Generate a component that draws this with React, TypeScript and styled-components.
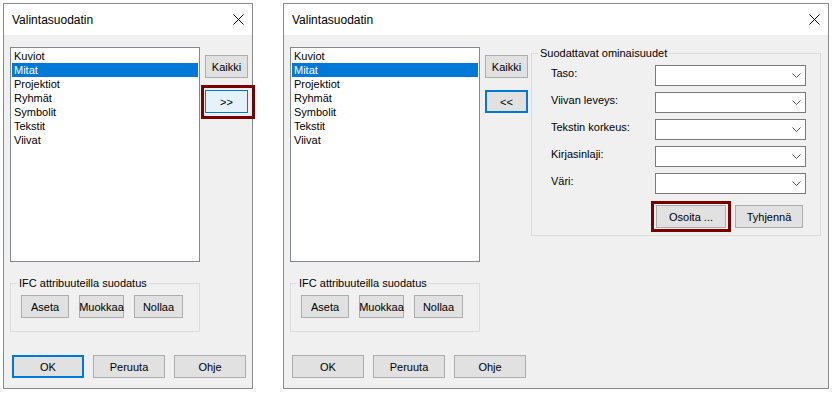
import React from "react";
import styled, { createGlobalStyle, css } from "styled-components";

const GlobalStyle = createGlobalStyle`
  html, body { margin: 0; padding: 0; background: #ffffff; }
  body {
    font-family: "Liberation Sans", Arial, sans-serif;
    font-size: 11px;
    color: #000000;
  }
  * { box-sizing: border-box; }
`;

const Page = styled.div`
  display: flex;
  align-items: flex-start;
  gap: 30px;
  padding: 3px 0 0 3px;
  width: 836px;
  height: 395px;
`;

const Dialog = styled.div<{ $w: number }>`
  width: ${(p) => p.$w}px;
  height: 386px;
  border: 1px solid #8a8a8a;
  background: #f0f0f0;
  display: flex;
  flex-direction: column;
`;

const TitleBar = styled.div`
  height: 31px;
  background: #ffffff;
  display: flex;
  align-items: center;
  justify-content: space-between;
  padding: 0 8px 0 8px;
  flex: none;
`;

const Title = styled.span`
  font-size: 12px;
  line-height: 16px;
`;

const CloseIcon = () => (
  <svg width="11" height="11" viewBox="0 0 11 11">
    <path d="M0.5 0.5 L10.5 10.5 M10.5 0.5 L0.5 10.5" stroke="#000" strokeWidth="1" fill="none" />
  </svg>
);

const Body = styled.div`
  display: flex;
  flex-direction: column;
  padding: 12px 0 0 6px;
`;

const Main = styled.div`
  display: flex;
  align-items: flex-start;
`;

const LeftCol = styled.div`
  display: flex;
  flex-direction: column;
`;

const ListBox = styled.div`
  width: 190px;
  height: 215px;
  background: #ffffff;
  border: 1px solid #828790;
  padding: 1px;
  display: flex;
  flex-direction: column;
`;

const ListItem = styled.div<{ $selected?: boolean }>`
  height: 14px;
  line-height: 14px;
  padding-left: 2px;
  white-space: nowrap;
  ${(p) =>
    p.$selected &&
    css`
      background: #0078d7;
      color: #ffffff;
    `}
`;

const SideCol = styled.div`
  display: flex;
  flex-direction: column;
  gap: 12px;
  padding-top: 8px;
  margin-left: 5px;
`;

type Variant = "normal" | "default" | "hover";

const Button = styled.div<{ $w: number; $variant?: Variant }>`
  width: ${(p) => p.$w}px;
  height: 23px;
  display: flex;
  align-items: center;
  justify-content: center;
  background: #e1e1e1;
  border: 1px solid #adadad;
  white-space: nowrap;
  flex: none;
  ${(p) =>
    p.$variant === "default" &&
    css`
      border: 2px solid #0078d7;
    `}
  ${(p) =>
    p.$variant === "hover" &&
    css`
      background: #e5f1fb;
      border: 1px solid #0078d7;
    `}
`;

const Marked = styled.div<{ $t: number; $r: number; $b: number; $l: number }>`
  position: relative;
  display: flex;
  &::after {
    content: "";
    position: absolute;
    top: -${(p) => p.$t}px;
    right: -${(p) => p.$r}px;
    bottom: -${(p) => p.$b}px;
    left: -${(p) => p.$l}px;
    border: 3px solid #7b0000;
    pointer-events: none;
  }
`;

const GroupBox = styled.div<{ $w: number; $h: number; $mt: number; $ml?: number }>`
  width: ${(p) => p.$w}px;
  height: ${(p) => p.$h}px;
  margin-top: ${(p) => p.$mt}px;
  margin-left: ${(p) => p.$ml ?? 0}px;
  border: 1px solid #dcdcdc;
  display: flex;
  flex-direction: column;
`;

const GroupTitle = styled.span`
  align-self: flex-start;
  margin: -7px 0 0 6px;
  padding: 0 2px;
  line-height: 13px;
  background: #f0f0f0;
`;

const IfcButtons = styled.div`
  display: flex;
  gap: 10px;
  margin-top: 5px;
  padding-left: 10px;
`;

const PropRows = styled.div`
  display: flex;
  flex-direction: column;
  gap: 6px;
  margin-top: 5px;
  padding-left: 19px;
`;

const PropRow = styled.div`
  display: flex;
  align-items: flex-start;
`;

const PropLabel = styled.span`
  width: 104px;
  line-height: 14px;
  padding-top: 1px;
`;

const Combo = styled.div`
  width: 151px;
  height: 21px;
  background: #ffffff;
  border: 1px solid #7a7a7a;
  display: flex;
  align-items: center;
  justify-content: flex-end;
  padding-right: 4px;
`;

const Chevron = () => (
  <svg width="9" height="5" viewBox="0 0 9 5">
    <path d="M0.5 0.5 L4.5 4.5 L8.5 0.5" stroke="#555" strokeWidth="1" fill="none" />
  </svg>
);

const PropButtons = styled.div`
  display: flex;
  gap: 9px;
  margin-top: 11px;
  padding-left: 124px;
`;

const Footer = styled.div`
  display: flex;
  gap: 9px;
  margin-top: 23px;
  padding-left: 2px;
`;

const items = ["Kuviot", "Mitat", "Projektiot", "Ryhmät", "Symbolit", "Tekstit", "Viivat"];

const props = ["Taso:", "Viivan leveys:", "Tekstin korkeus:", "Kirjasinlaji:", "Väri:"];

const ListPanel = () => (
  <LeftCol>
    <ListBox>
      {items.map((it) => (
        <ListItem key={it} $selected={it === "Mitat"}>
          {it}
        </ListItem>
      ))}
    </ListBox>
    <GroupBox $w={190} $h={49} $mt={21}>
      <GroupTitle>IFC attribuuteilla suodatus</GroupTitle>
      <IfcButtons>
        <Button $w={48}>Aseta</Button>
        <Button $w={45}>Muokkaa</Button>
        <Button $w={49}>Nollaa</Button>
      </IfcButtons>
    </GroupBox>
  </LeftCol>
);

const Footer3 = ({ okDefault }: { okDefault?: boolean }) => (
  <Footer>
    <Button $w={72} $variant={okDefault ? "default" : "normal"}>
      OK
    </Button>
    <Button $w={72}>Peruuta</Button>
    <Button $w={72}>Ohje</Button>
  </Footer>
);

const Header = () => (
  <TitleBar>
    <Title>Valintasuodatin</Title>
    <CloseIcon />
  </TitleBar>
);

export default function App() {
  return (
    <>
      <GlobalStyle />
      <Page>
        <Dialog $w={250}>
          <Header />
          <Body>
            <Main>
              <ListPanel />
              <SideCol>
                <Button $w={43}>Kaikki</Button>
                <Marked $t={5} $r={7} $b={6} $l={4}>
                  <Button $w={43} $variant="hover">
                    &gt;&gt;
                  </Button>
                </Marked>
              </SideCol>
            </Main>
            <Footer3 okDefault />
          </Body>
        </Dialog>
        <Dialog $w={546}>
          <Header />
          <Body>
            <Main>
              <ListPanel />
              <SideCol>
                <Button $w={43}>Kaikki</Button>
                <Button $w={43} $variant="default">
                  &lt;&lt;
                </Button>
              </SideCol>
              <GroupBox $w={290} $h={183} $mt={6} $ml={3}>
                <GroupTitle>Suodattavat ominaisuudet</GroupTitle>
                <PropRows>
                  {props.map((p) => (
                    <PropRow key={p}>
                      <PropLabel>{p}</PropLabel>
                      <Combo>
                        <Chevron />
                      </Combo>
                    </PropRow>
                  ))}
                </PropRows>
                <PropButtons>
                  <Marked $t={4} $r={5} $b={4} $l={5}>
                    <Button $w={70}>Osoita ...</Button>
                  </Marked>
                  <Button $w={68}>Tyhjennä</Button>
                </PropButtons>
              </GroupBox>
            </Main>
            <Footer3 />
          </Body>
        </Dialog>
      </Page>
    </>
  );
}
